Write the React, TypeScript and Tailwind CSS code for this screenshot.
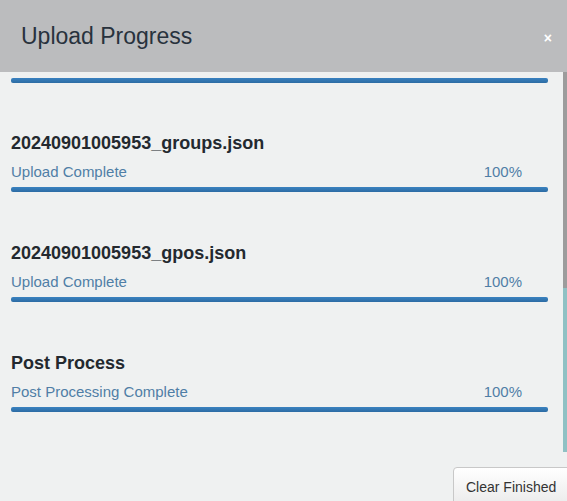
const items = [
  { name: '20240901005953_groups.json', status: 'Upload Complete', pct: 100 },
  { name: '20240901005953_gpos.json', status: 'Upload Complete', pct: 100 },
  { name: 'Post Process', status: 'Post Processing Complete', pct: 100 },
];

function Bar({ pct }: { pct: number }) {
  return (
    <div className="h-[5px] w-[537px] rounded-[2px] bg-transparent">
      <div
        className="h-full rounded-[2px] bg-gradient-to-b from-[#3a82c0] to-[#2c6ca4]"
        style={{ width: `${pct}%` }}
      />
    </div>
  );
}

export default function App() {
  return (
    <div className="relative h-[501px] w-[567px] overflow-hidden bg-[#eff1f1] font-['Liberation_Sans',Arial,sans-serif]">
      <div className="flex h-[72px] items-center justify-between bg-[#bbbcbe] pl-[21px] pr-[15px]">
        <h2 className="text-[23px] leading-none text-[#28323d]">Upload Progress</h2>
        <button className="mt-[4px] text-[14px] font-bold leading-none text-white">×</button>
      </div>

      <div className="flex">
        <div className="w-[563px] pl-[11px]">
          <div className="mt-[6px]">
            <Bar pct={100} />
          </div>
          {items.map((it, i) => (
            <div key={it.name} className={i === 0 ? 'mt-[49px]' : 'mt-[50px]'}>
              <h3 className="text-[18px] font-bold leading-[22px] text-[#23292f]">{it.name}</h3>
              <div className="mt-[8px] flex w-[511px] justify-between text-[15px] leading-[20px] text-[#4f7ea6]">
                <span>{it.status}</span>
                <span>{it.pct}%</span>
              </div>
              <div className="mt-[5px]">
                <Bar pct={it.pct} />
              </div>
            </div>
          ))}
        </div>
        <div className="flex w-[4px] flex-col">
          <div className="h-[216px] bg-[#9c9c9c]" />
          <div className="h-[164px] bg-[#8fc1c4]" />
        </div>
      </div>

      <button className="absolute left-[453px] top-[467px] h-[40px] w-[120px] rounded-[4px] border border-[#c8c8c8] bg-gradient-to-b from-[#ffffff] to-[#eaeaea] pl-[12px] text-left text-[14px] leading-[32px] text-[#333]">
        Clear Finished
      </button>
    </div>
  );
}
